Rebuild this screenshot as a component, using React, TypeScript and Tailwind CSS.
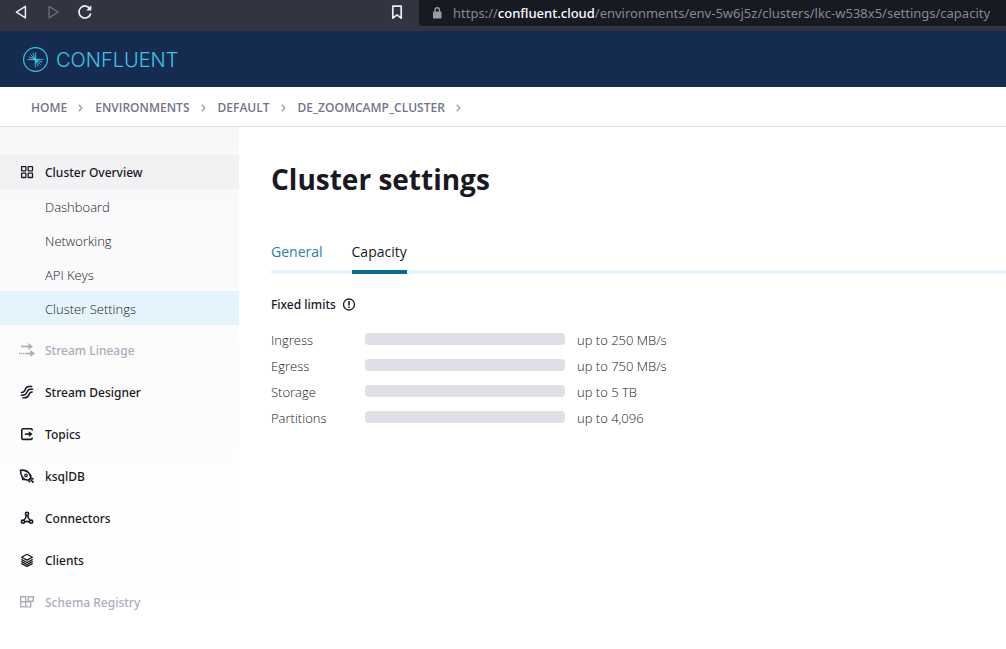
import type { ReactNode } from "react";

type Item = { label: string; icon: ReactNode; disabled?: boolean };

const svg = "size-4 shrink-0";

const GridIcon = () => (
  <svg className={svg} viewBox="0 0 16 16" fill="none" stroke="currentColor" strokeWidth="1.3">
    <rect x="2.6" y="1.6" width="4.3" height="4.3" rx="0.3" />
    <rect x="9.2" y="1.6" width="4.3" height="4.3" rx="0.3" />
    <rect x="2.6" y="8.2" width="4.3" height="4.3" rx="0.3" />
    <rect x="9.2" y="8.2" width="4.3" height="4.3" rx="0.3" />
  </svg>
);

const LineageIcon = () => (
  <svg className={svg} viewBox="0 0 16 16" fill="none" stroke="currentColor" strokeWidth="1.7">
    <path d="M2 3.500h9" />
    <path d="M9.500 0 13.800 3.500 9.500 7z" fill="currentColor" stroke="none" />
    <path d="M0 10.500h6.500" strokeDasharray="1.400 0.700" />
    <path d="M6.500 10.500H13" />
    <path d="M11.300 7.100 15.900 10.500 11.300 13.900z" fill="currentColor" stroke="none" />
  </svg>
);

const DesignerIcon = () => (
  <svg className={svg} viewBox="0 0 16 16" fill="none" stroke="currentColor" strokeWidth="1.5" strokeLinecap="round">
    <path d="M2.400 7.600C7.600 7.800 4.800 1.500 9.800 1.500H12.600" />
    <path d="M2.400 10.200h1.400C9.600 10.200 6.600 4.200 11.400 4.200h2.200" />
    <path d="M4 12.800h1.800C11.400 12.800 8.600 6.900 13.200 6.900" />
  </svg>
);

const TopicsIcon = () => (
  <svg className={svg} viewBox="0 0 16 16" fill="none" stroke="currentColor" strokeWidth="1.600">
    <path d="M13.200 3.500V3a1.200 1.200 0 0 0-1.200-1.200H4A1.200 1.200 0 0 0 2.800 3v8.200A1.200 1.200 0 0 0 4 12.400h8a1.200 1.200 0 0 0 1.200-1.200v-.5" />
    <path d="M5.800 7.100H12" />
    <path d="M9.800 4.300 13.700 7.100 9.800 9.900z" fill="currentColor" stroke="none" />
  </svg>
);

const RocketIcon = () => (
  <svg className={svg} viewBox="0 0 16 16" fill="none" stroke="currentColor" strokeWidth="1.600" strokeLinejoin="round">
    <path d="M1.500 1.200c4-.4 7.400 1.200 9.200 3.900.8 1.300 1.100 2.500 1 3.700L9.500 11C7 11.400 4.900 10.400 3.500 8.400 2.200 6.500 1.500 4.200 1.500 1.200z" />
    <circle cx="7" cy="6.400" r="1.300" strokeWidth="1.200" />
    <path d="M2.800 7.500 3.600 11 6 10.600zM10.800 5.100l1.300 1.500-.5 2.200z" fill="currentColor" strokeWidth="0.800" />
    <path d="m12.300 9 2.200 1.400M9.600 11.400l1.500 1.800M11.200 10.300l3.300 3.300" strokeWidth="1.600" />
  </svg>
);

const ConnectorsIcon = () => (
  <svg className={svg} viewBox="0 0 16 16" fill="none" stroke="currentColor" strokeWidth="1.600">
    <circle cx="8" cy="2.900" r="1.600" />
    <circle cx="3.900" cy="10.700" r="1.600" />
    <circle cx="12.100" cy="10.700" r="1.600" />
    <path d="M7.200 4.500c0 2.300-1 3.500-2.300 4.700M8.800 4.500c0 2.300 1 3.500 2.300 4.700M5.600 11c1.500-.8 3.300-.8 4.800 0" />
  </svg>
);

const ClientsIcon = () => (
  <svg className={svg} viewBox="0 0 16 16" fill="none" stroke="currentColor" strokeWidth="1.300" strokeLinejoin="round">
    <path d="M8 1.300 13.400 4.200 8 7.100 2.600 4.200z" />
    <path d="M2.600 6.200v.5L8 9.500l5.400-2.800v-.5M2.600 8.300v.4L8 11.500l5.400-2.800v-.4M2.600 10.300v.3L8 13.300l5.400-2.700v-.3" />
  </svg>
);

const SchemaIcon = () => (
  <svg className={svg} viewBox="0 0 16 16" fill="none" stroke="currentColor" strokeWidth="1.400">
    <path d="M1.700 1.800h5v5h-5zM1.700 6.800h5v5.100h-5zM6.700 6.800h5v5.100h-5zM9.300 1.700h5v4.600h-5z" />
  </svg>
);

const items: Item[] = [
  { label: "Stream Lineage", icon: <LineageIcon />, disabled: true },
  { label: "Stream Designer", icon: <DesignerIcon /> },
  { label: "Topics", icon: <TopicsIcon /> },
  { label: "ksqlDB", icon: <RocketIcon /> },
  { label: "Connectors", icon: <ConnectorsIcon /> },
  { label: "Clients", icon: <ClientsIcon /> },
  { label: "Schema Registry", icon: <SchemaIcon />, disabled: true },
];

const subItems = ["Dashboard", "Networking", "API Keys", "Cluster Settings"];

const crumbs = ["HOME", "ENVIRONMENTS", "DEFAULT", "DE_ZOOMCAMP_CLUSTER"];

const limits = [
  { name: "Ingress", value: "up to 250 MB/s" },
  { name: "Egress", value: "up to 750 MB/s" },
  { name: "Storage", value: "up to 5 TB" },
  { name: "Partitions", value: "up to 4,096" },
];

function BrowserBar() {
  return (
    <div className="flex h-[31px] items-start bg-[#323442] text-[#eceef0]">
      <div className="flex grow items-center gap-4 pt-1 pl-[13px]">
        <button aria-label="Back" className="size-4">
          <svg className="size-4" viewBox="0 0 16 16" fill="none" stroke="currentColor" strokeWidth="1.500" strokeLinejoin="round">
            <path d="M12.400 2.400v11.500L3.400 8.200z" />
          </svg>
        </button>
        <button aria-label="Forward" className="size-4 text-[#686a76]">
          <svg className="size-4" viewBox="0 0 16 16" fill="none" stroke="currentColor" strokeWidth="1.400" strokeLinejoin="round">
            <path d="M4 2.400v11.500L13 8.200z" />
          </svg>
        </button>
        <button aria-label="Reload" className="size-4">
          <svg className="size-4" viewBox="0 0 16 16" fill="none" stroke="currentColor" strokeWidth="1.700">
            <path d="M13.200 5A6 6 0 1 0 13.800 9.500" />
            <path d="M14.300 1.200v5.200H9.200z" fill="currentColor" stroke="none" />
          </svg>
        </button>
      </div>
      <button aria-label="Bookmark" className="mt-1 mr-[14px] size-4">
        <svg className="size-4" viewBox="0 0 16 16" fill="none" stroke="currentColor" strokeWidth="1.700">
          <path d="M3.800 2.200h8.400v12L8 10.800l-4.200 3.400z" strokeLinejoin="round" />
        </svg>
      </button>
      <div className="flex h-[26px] w-[587px] items-center gap-[11px] rounded-bl-[3px] bg-[#181a21] pl-[13px] whitespace-nowrap">
        <svg className="h-3 w-[10px] shrink-0" viewBox="0 0 10 12" fill="none">
          <rect x="1" y="4.500" width="8.500" height="7" rx="0.800" fill="#9a9ca3" />
          <path d="M3 5V3a2.200 2.200 0 0 1 4.500 0v2" stroke="#9a9ca3" strokeWidth="1.300" />
        </svg>
        <span className="font-['Noto_Sans',sans-serif] text-[13px] leading-5 text-[#868990]">
          https://<span className="font-medium text-white">confluent.cloud</span>/environments/env-5w6j5z/clusters/lkc-w538x5/settings/capacity
        </span>
      </div>
    </div>
  );
}

function Logo() {
  return (
    <a href="#home" className="flex items-center gap-[7px] text-[#3fc3e6]">
      <svg className="size-[26px]" viewBox="0 0 26 26" fill="none" stroke="currentColor">
        <circle cx="12.500" cy="12.500" r="11.900" strokeWidth="1.200" />
        <path d="M12.500 5 12.900 11.900 20.500 12.500 13.100 13.100 12.500 20.500 11.900 13.100 4.500 12.500 12.100 11.900z" fill="currentColor" strokeWidth="0.500" />
        <path
          strokeWidth="0.900"
          d="M12 12 9.800 5.800M12 12 7.400 7.400M12 12 5.600 9.900M13 13l2.300 6.300M13 13l4.700 4.700M13 13l6.400 2.200"
        />
      </svg>
      <span className="font-['Inter',sans-serif] text-[20px] leading-6 font-light">CONFLUENT</span>
    </a>
  );
}

const Chevron = () => (
  <svg className="mx-[10px] size-2" viewBox="0 0 8 8" fill="none" stroke="#9a9ab0" strokeWidth="1.300">
    <path d="m1.800 0.800 3 3.200-3 3.200" />
  </svg>
);

export default function App() {
  return (
    <div className="flex min-h-screen flex-col bg-white font-['Open_Sans','Noto_Sans',sans-serif] text-[13px] leading-5 text-[#191924]">
      <BrowserBar />
      <header className="flex h-14 items-center bg-[#152c50] pt-px pl-[23px]">
        <Logo />
      </header>
      <nav aria-label="Breadcrumb" className="flex h-10 items-center border-b border-[#dddde6] pt-0.5 pl-[31px] text-[12px] font-semibold text-[#74748a]">
        {crumbs.map((c) => (
          <span key={c} className="flex items-center">
            <a href="#crumb">{c}</a>
            <Chevron />
          </span>
        ))}
      </nav>
      <div className="flex grow">
        <aside className="w-[239px] shrink-0 bg-linear-to-b from-[#f8f8fa] to-white to-90% pt-7">
          <a href="#overview" className="flex h-[34px] items-center gap-[10px] bg-[#f2f2f4] pt-0.5 pl-[19px] font-['Noto_Sans',sans-serif] text-[12px] font-medium">
            <GridIcon />
            Cluster Overview
          </a>
          {subItems.map((s) => (
            <a
              key={s}
              href="#sub"
              className={`flex h-[34px] items-center pt-0.5 pl-[45px] font-light ${s === "Cluster Settings" ? "bg-[#e5f4fc]" : ""}`}
            >
              {s}
            </a>
          ))}
          <div className="mt-2 flex flex-col gap-2">
            {items.map((i) => (
              <a
                key={i.label}
                href="#item"
                className={`flex h-[34px] items-center gap-[10px] pt-0.5 pl-[19px] font-['Noto_Sans',sans-serif] text-[12px] font-medium ${i.disabled ? "text-[#acacbb]" : ""}`}
              >
                {i.icon}
                {i.label}
              </a>
            ))}
          </div>
        </aside>
        <main className="grow pt-8 pl-8">
          <h1 className="text-[28px] leading-10 font-bold">Cluster settings</h1>
          <div role="tablist" className="mt-9 flex gap-[29px] border-b-4 border-[#e5f4fc] text-[14px] font-medium">
            <button role="tab" aria-selected="false" className="h-[35px] pb-0.5 text-[#2580aa]">
              General
            </button>
            <button role="tab" aria-selected="true" className="-mb-1 h-[39px] border-b-4 border-[#006d92] pb-0.5">
              Capacity
            </button>
          </div>
          <h2 className="mt-[21px] flex items-center gap-[6px] font-['Noto_Sans',sans-serif] text-[12px] font-medium">
            Fixed limits
            <svg className="size-[14px]" viewBox="0 0 14 14" fill="none" stroke="currentColor" strokeWidth="1.300">
              <circle cx="7" cy="6.500" r="5.500" />
              <path d="M7 3v4.500M7 8.500v1.500" strokeWidth="1.600" />
            </svg>
          </h2>
          <table className="mt-3 font-light">
            <tbody>
              {limits.map((l) => (
                <tr key={l.name} className="h-[26px]">
                  <th scope="row" className="w-[94px] text-left font-light">
                    {l.name}
                  </th>
                  <td className="w-[212px] pb-0.5">
                    <div className="h-3 w-[200px] rounded-[4px] bg-[#dfe0e6]" />
                  </td>
                  <td>{l.value}</td>
                </tr>
              ))}
            </tbody>
          </table>
        </main>
      </div>
    </div>
  );
}
